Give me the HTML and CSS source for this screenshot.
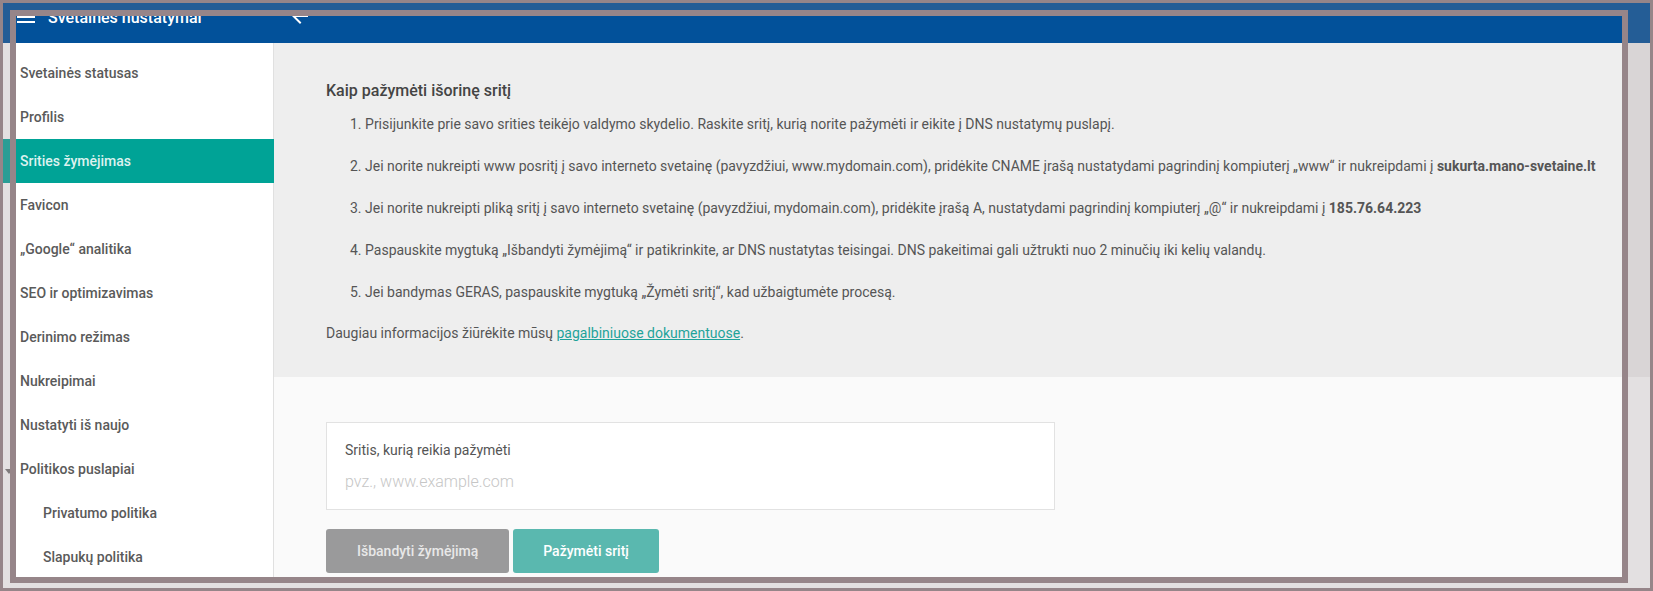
FILE: index.html
```html
<!DOCTYPE html>
<html lang="lt">
<head>
  <meta charset="UTF-8">
  <meta name="viewport" content="width=device-width, initial-scale=1.0">
  <title>Svetainės nustatymai</title>
  <link rel="stylesheet" href="styles.css">
</head>
<body>

  <div class="screen">
    <!-- page behind the dialog frame -->
    <div class="ghost-top"></div>
    <div class="ghost-body">
      <div class="ghost-side">
        <div class="ghost-active"></div>
        <div class="ghost-caret"></div>
      </div>
      <div class="ghost-main">
        <div class="ghost-info"></div>
      </div>
    </div>

    <div class="frame">
      <header class="topbar">
        <div class="topbar-row">
          <div class="brand">
            <span class="menu-icon"><i></i><i></i><i></i></span>
            <span class="brand-title">Svetainės nustatymai</span>
          </div>
          <svg class="back-icon" viewBox="0 0 24 24"><path d="M20 11H7.83l5.59-5.59L12 4l-8 8 8 8 1.41-1.41L7.83 13H20v-2z"/></svg>
        </div>
      </header>

      <div class="layout">
        <nav class="sidebar">
          <a href="#" class="nav-item">Svetainės statusas</a>
          <a href="#" class="nav-item">Profilis</a>
          <a href="#" class="nav-item active">Srities žymėjimas</a>
          <a href="#" class="nav-item">Favicon</a>
          <a href="#" class="nav-item">„Google“ analitika</a>
          <a href="#" class="nav-item">SEO ir optimizavimas</a>
          <a href="#" class="nav-item">Derinimo režimas</a>
          <a href="#" class="nav-item">Nukreipimai</a>
          <a href="#" class="nav-item">Nustatyti iš naujo</a>
          <a href="#" class="nav-item">Politikos puslapiai</a>
          <a href="#" class="nav-item sub">Privatumo politika</a>
          <a href="#" class="nav-item sub">Slapukų politika</a>
        </nav>

        <main class="content">
          <section class="info">
            <h2>Kaip pažymėti išorinę sritį</h2>
            <ol class="steps">
              <li>Prisijunkite prie savo srities teikėjo valdymo skydelio. Raskite sritį, kurią norite pažymėti ir eikite į DNS nustatymų puslapį.</li>
              <li>Jei norite nukreipti www posritį į savo interneto svetainę (pavyzdžiui, www.mydomain.com), pridėkite CNAME įrašą nustatydami pagrindinį kompiuterį „www“ ir nukreipdami į <b>sukurta.mano-svetaine.lt</b></li>
              <li>Jei norite nukreipti pliką sritį į savo interneto svetainę (pavyzdžiui, mydomain.com), pridėkite įrašą A, nustatydami pagrindinį kompiuterį „@“ ir nukreipdami į <b>185.76.64.223</b></li>
              <li>Paspauskite mygtuką „Išbandyti žymėjimą“ ir patikrinkite, ar DNS nustatytas teisingai. DNS pakeitimai gali užtrukti nuo 2 minučių iki kelių valandų.</li>
              <li>Jei bandymas GERAS, paspauskite mygtuką „Žymėti sritį“, kad užbaigtumėte procesą.</li>
            </ol>
            <p class="more">Daugiau informacijos žiūrėkite mūsų <a href="#">pagalbiniuose dokumentuose</a>.</p>
          </section>

          <section class="form-area">
            <div class="field-card">
              <label for="domain">Sritis, kurią reikia pažymėti</label>
              <input type="text" id="domain" name="domain" placeholder="pvz., www.example.com">
            </div>
            <div class="actions">
              <button type="button" class="btn btn-test">Išbandyti žymėjimą</button>
              <button type="button" class="btn btn-mark">Pažymėti sritį</button>
            </div>
          </section>
        </main>
      </div>
    </div>
  </div>

</body>
</html>
```

FILE: styles.css
```css
body {
  margin: 0;
  font-family: Roboto, "Noto Sans", sans-serif;
  background-color: #e3dfe0;
  overflow: hidden;
}
.screen {
  position: relative;
  width: 1653px;
  height: 591px;
  box-sizing: border-box;
  border: 3px solid #968589;
  display: flex;
  flex-direction: column;
  background-color: #e3e0e1;
}
.ghost-top {
  height: 40px;
  background-color: #245d96;
}
.ghost-body {
  flex: 1;
  display: flex;
}
.ghost-side {
  width: 300px;
  padding-top: 96px;
}
.ghost-active {
  height: 44px;
  background-color: #2a9d95;
}
.ghost-caret {
  margin: 286px 0 0 2px;
  width: 0;
  height: 0;
  border-left: 4px solid transparent;
  border-right: 4px solid transparent;
  border-top: 5px solid #7f7b7c;
}
.ghost-main {
  flex: 1;
}
.ghost-info {
  height: 334px;
  background-color: #d9d5d6;
}

/* dialog frame */
.frame {
  position: absolute;
  top: 7px;
  left: 7px;
  width: 1606px;
  height: 561px;
  border: 6px solid #968589;
  background-color: #fafafa;
  display: flex;
  flex-direction: column;
  overflow: hidden;
}
.topbar {
  height: 27px;
  flex-shrink: 0;
  background-color: #02519a;
  color: #fff;
  overflow: hidden;
}
.topbar-row {
  height: 56px;
  margin-top: -28px;
  display: flex;
  align-items: center;
}
.brand {
  width: 258px;
  display: flex;
  align-items: center;
}
.menu-icon {
  width: 18px;
  height: 12px;
  margin: 1px 0 0 1px;
  display: flex;
  flex-direction: column;
  justify-content: space-between;
}
.menu-icon i {
  height: 2px;
  background-color: #fff;
}
.brand-title {
  margin-left: 13px;
  padding-top: 3px;
  font-size: 16px;
  font-weight: 500;
  white-space: nowrap;
}
.back-icon {
  width: 24px;
  height: 24px;
  margin-left: 14px;
  fill: #fff;
}

.layout {
  flex: 1;
  display: flex;
  min-height: 0;
}
.sidebar {
  width: 257px;
  flex-shrink: 0;
  padding-top: 8px;
  background-color: #fff;
  border-right: 1px solid #e0e0e0;
}
.nav-item {
  display: block;
  height: 44px;
  line-height: 44px;
  padding-left: 4px;
  font-size: 14px;
  font-weight: 500;
  color: #5a5a5a;
  text-decoration: none;
  white-space: nowrap;
}
.nav-item.active {
  background-color: #00a396;
  color: #dcf2ef;
  margin-right: -1px;
}
.nav-item.sub {
  padding-left: 27px;
}

.content {
  flex: 1;
  min-width: 0;
  display: flex;
  flex-direction: column;
}
.info {
  height: 334px;
  box-sizing: border-box;
  padding: 38px 16px 0 52px;
  background-color: #eee;
  color: #555;
}
.info h2 {
  margin: 0;
  font-size: 16px;
  line-height: 20px;
  font-weight: 500;
  color: #444;
}
.steps {
  margin: 13px 0 0;
  padding-left: 24px;
  list-style-position: inside;
}
.steps li {
  font-size: 14px;
  line-height: 20px;
}
.steps li + li {
  margin-top: 22px;
}
.steps b {
  font-weight: 700;
}
.more {
  margin: 21px 0 0;
  font-size: 14px;
  line-height: 20px;
}
.more a {
  color: #1fa39a;
}

.form-area {
  flex: 1;
  padding: 45px 0 0 52px;
}
.field-card {
  width: 729px;
  box-sizing: border-box;
  padding: 17px 18px 15px;
  background-color: #fff;
  border: 1px solid #e2e2e2;
}
.field-card label {
  display: block;
  font-size: 14px;
  line-height: 20px;
  color: #555;
}
.field-card input {
  display: block;
  width: 100%;
  height: 24px;
  margin-top: 10px;
  padding: 0;
  border: none;
  outline: none;
  background: transparent;
  font-family: Roboto, sans-serif;
  font-size: 16px;
  font-weight: 300;
  line-height: 24px;
  color: #555;
}
.field-card input::placeholder {
  color: #c6c6c6;
}
.actions {
  margin-top: 19px;
  display: flex;
  gap: 4px;
}
.btn {
  height: 44px;
  padding: 0 31px;
  border: none;
  border-radius: 3px;
  font-family: Roboto, sans-serif;
  font-size: 14px;
  font-weight: 500;
}
.btn-test {
  background-color: #9a9a9b;
  color: #e8e8e8;
}
.btn-mark {
  padding: 0 30px;
  background-color: #5ab8af;
  color: #fff;
}
```
